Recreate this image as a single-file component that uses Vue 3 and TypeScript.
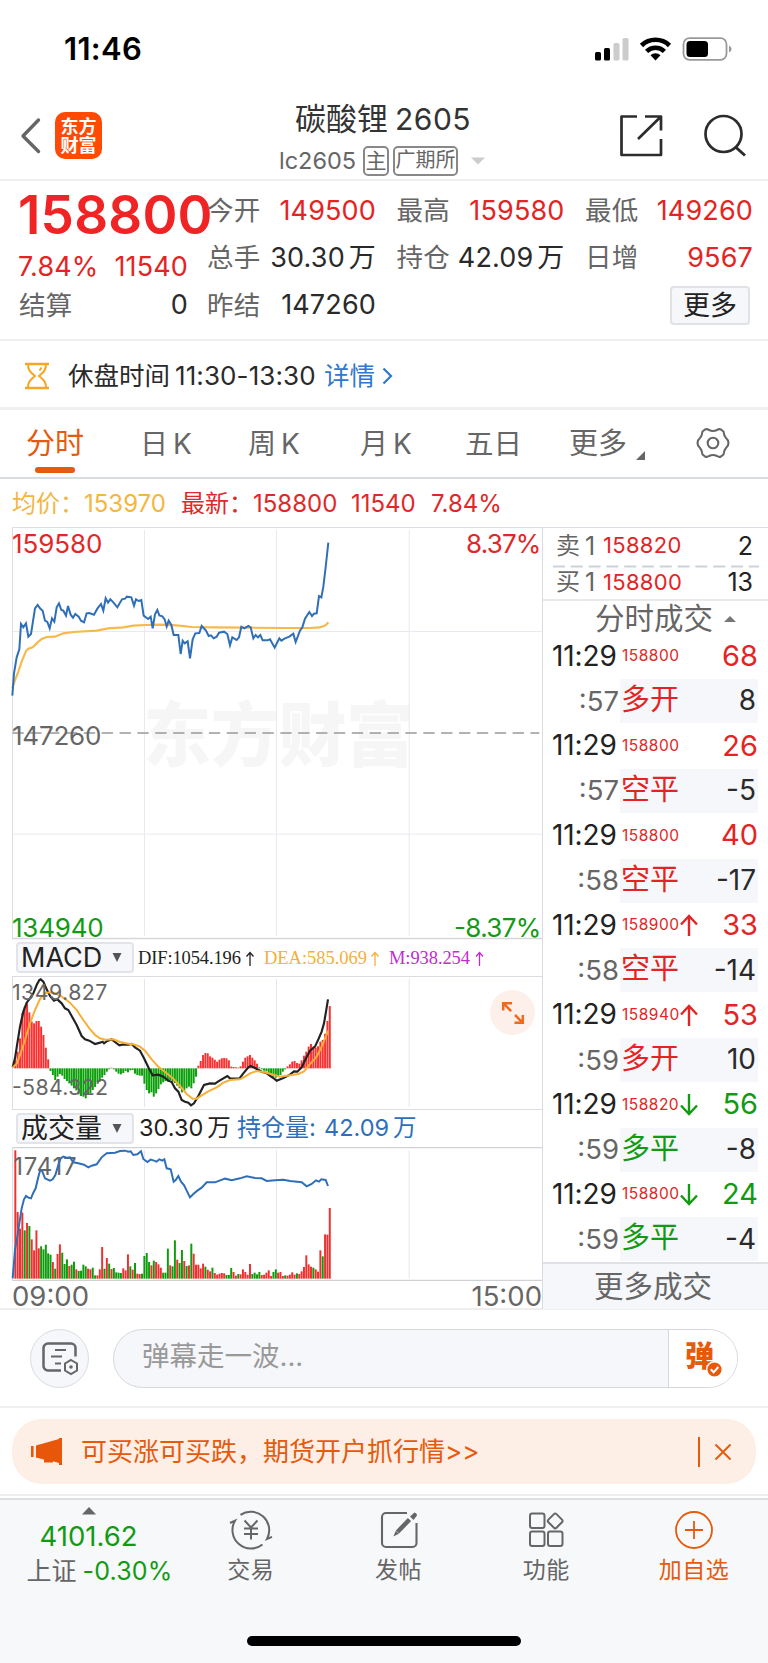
<script setup lang="ts">
interface Stat { label: string; value: string; tone: string }
interface Trade { sec: string; price: string; dir: string; vol: string; tone: string; kind: string; delta: string }

const stats: Stat[] = [
  { label: '今开', value: '149500', tone: 'red' },
  { label: '最高', value: '159580', tone: 'red' },
  { label: '最低', value: '149260', tone: 'red' },
  { label: '总手', value: '30.30万', tone: 'ink' },
  { label: '持仓', value: '42.09万', tone: 'ink' },
  { label: '日增', value: '9567', tone: 'red' },
  { label: '昨结', value: '147260', tone: 'ink' },
]

const trades: Trade[] = [
  { sec: ':57', price: '158800', dir: '', vol: '68', tone: 'red', kind: '多开', delta: '8' },
  { sec: ':57', price: '158800', dir: '', vol: '26', tone: 'red', kind: '空平', delta: '-5' },
  { sec: ':58', price: '158800', dir: '', vol: '40', tone: 'red', kind: '空平', delta: '-17' },
  { sec: ':58', price: '158900', dir: 'up', vol: '33', tone: 'red', kind: '空平', delta: '-14' },
  { sec: ':59', price: '158940', dir: 'up', vol: '53', tone: 'red', kind: '多开', delta: '10' },
  { sec: ':59', price: '158820', dir: 'down', vol: '56', tone: 'green', kind: '多平', delta: '-8' },
  { sec: ':59', price: '158800', dir: 'down', vol: '24', tone: 'green', kind: '多平', delta: '-4' },
]

const priceLine = '37,527 42,460 50,412 58,388 63,312 70,322 78,310 85,350 93,342 105,265 113,255 120,265 128,272 135,302 142,306 149,325 156,295 163,305 170,262 177,250 184,270 190,272 198,287 204,258 212,284 219,293 226,282 236,290 243,302 252,307 260,280 268,279 282,284 292,266 303,252 310,272 317,235 324,248 331,238 340,247 352,262 366,238 375,236 381,230 394,232 402,257 408,238 416,243 424,240 431,287 444,297 452,290 458,325 465,283 472,270 478,286 487,289 494,298 500,320 506,302 514,315 521,345 535,345 542,402 548,362 554,370 563,364 570,415 578,358 586,340 598,339 605,318 618,332 626,348 633,346 641,355 650,350 657,338 672,335 682,342 690,376 697,352 710,360 717,352 724,320 733,325 745,318 752,322 760,355 767,345 774,352 781,345 788,361 802,361 810,358 824,383 838,355 844,362 855,355 868,350 880,341 887,366 900,332 907,322 915,296 928,276 936,288 942,281 950,280 957,228 964,232 970,200 976,150 985,68'
const avgLine = '37,505 45,480 55,455 65,425 78,393 85,386 98,382 112,368 125,357 140,351 165,350 190,340 220,336 290,332 325,325 370,322 400,317 435,315 480,314 530,316 575,321 640,322 740,323 850,324 930,324 958,322 970,319 978,315 985,307'
const difLine = '38,412 45,385 52,340 60,290 70,245 80,218 90,205 100,190 110,165 118,150 122,148 130,155 140,178 150,198 162,212 172,208 185,220 195,235 205,240 215,258 230,285 245,318 255,328 268,332 285,342 300,338 308,335 312,340 320,334 335,328 345,336 358,346 370,343 385,344 395,342 405,352 420,362 432,385 445,412 458,436 475,434 490,440 505,452 515,456 525,475 535,485 545,510 555,515 565,518 573,526 582,520 595,498 612,465 630,460 645,461 655,454 665,448 682,438 690,445 718,446 730,430 745,412 752,408 765,414 785,425 800,430 820,444 830,452 850,444 870,434 882,424 892,425 905,412 918,385 930,362 945,350 955,328 965,305 972,280 978,245 984,208'
const deaLine = '38,412 50,402 60,375 75,330 90,280 105,240 120,207 135,190 148,187 165,190 180,196 195,207 210,218 230,240 250,270 268,295 285,315 300,325 315,329 340,328 360,336 385,341 400,343 420,350 435,362 455,388 475,410 500,430 520,446 540,468 560,492 578,506 590,506 605,496 625,484 650,472 670,458 690,450 720,448 735,440 750,430 770,423 790,426 815,433 840,440 870,436 895,432 912,424 930,402 950,380 965,350 978,318 985,302'
const oiLine = '38,505 45,420 52,380 58,340 65,295 72,268 78,258 85,263 93,265 100,248 107,235 114,205 120,182 126,182 135,205 150,212 158,208 166,195 175,165 182,145 190,140 200,143 210,142 220,157 235,160 252,164 265,172 275,167 290,163 305,142 320,130 345,128 360,123 375,122 385,125 392,124 400,135 412,133 423,124 430,147 442,156 452,149 462,152 470,155 478,148 487,152 493,148 500,175 512,178 521,215 527,210 535,198 543,215 552,225 570,262 580,252 592,242 605,233 620,217 645,217 675,206 695,211 720,205 740,199 765,204 785,205 800,213 825,211 850,209 870,213 905,217 920,229 935,222 948,211 957,215 964,208 977,210 984,228'

const macd: number[] = [25, 50, 90, 165, 185, 195, 168, 140, 135, 142, 142, 125, 100, 62, 27, -8, -20, -35, -25, -17, -22, -32, -38, -45, -52, -60, -66, -78, -83, -85, -90, -80, -74, -65, -56, -42, -40, -28, -20, -10, -3, 2, -3, -10, -16, -18, -14, -8, -12, -6, -5, -16, -20, -22, -22, -46, -65, -75, -72, -85, -75, -62, -48, -42, -38, -40, -36, -40, -44, -52, -60, -72, -68, -60, -55, -60, -45, -25, 8, 22, 40, 46, 45, 36, 32, 26, 20, 26, 30, 31, 30, 24, 5, 4, 3, 2, 6, 20, 32, 36, 40, 32, 24, 14, 3, -3, -7, -9, -15, -20, -25, -28, -24, -20, -10, -3, 6, 12, 20, 22, 16, 14, 24, 38, 50, 65, 73, 65, 62, 66, 80, 85, 104, 142, 187]
const volume = '385r 200r 150r 198r 145g 167r 158g 118r 85r 145r 91r 97g 88g 102g 76g 72g 50r 30g 74r 103r 78g 44g 58g 38r 42g 51g 28r 23g 24g 42g 37g 30r 28r 33g 10g 10r 28r 95r 30g 62r 45g 29r 32g 19g 18g 17g 31r 25r 73r 37g 27r 47g 15r 14r 15g 68g 77g 50g 40r 54g 50r 43r 33r 18g 18g 90g 40r 37g 115g 57r 47g 86g 53r 38g 40r 105g 75r 42r 42r 31r 45r 36g 27r 22r 33g 17r 12r 15r 17r 16r 11g 11g 32g 20r 9r 14g 13r 28r 20r 12r 44r 14g 18g 13g 20g 11r 12r 18r 25r 8r 20g 28g 18r 20r 8r 10g 9r 12r 19r 12r 16g 14r 22r 35r 70r 43r 36r 33g 28r 21r 85r 67g 133r 132r 212r'
  .split(' ')
  .map((s) => ({ h: parseInt(s, 10), up: s.endsWith('r') }))

const step = 7.04
const barX = (i: number): number => 43 + i * step
</script>

<template>
  <div class="app">
    <div class="status">
      <span class="clock">11:46</span>
      <svg class="sys" width="140" height="28" viewBox="594 35 140 28">
        <rect x="595" y="52" width="6" height="8.500" rx="1.600" />
        <rect x="604" y="48" width="6" height="12.500" rx="1.600" />
        <rect x="613.500" y="43" width="6" height="17.500" rx="1.600" fill="#ccc" />
        <rect x="622.500" y="38" width="6" height="22.500" rx="1.600" fill="#ccc" />
        <g fill="none" stroke="#000" stroke-width="4.600">
          <path d="M641.500 45.500a20 20 0 0 1 28 0" />
          <path d="M646.600 51.300a12.800 12.800 0 0 1 17.800 0" />
        </g>
        <path d="M655.500 60.500l-5-5.200a7 7 0 0 1 10 0z" />
        <rect x="683.500" y="38.200" width="43" height="21.600" rx="6" fill="none" stroke="#999" stroke-width="1.800" />
        <rect x="686.500" y="41" width="21.500" height="16" rx="3.500" />
        <path d="M729 45.500q2.600 1 2.600 3.500t-2.600 3.500z" fill="#999" />
      </svg>
    </div>

    <header class="head">
      <svg class="back" width="22" height="38" viewBox="0 0 22 38"><path d="M18.500 3L3 19L18.500 34.500" fill="none" stroke="#666" stroke-width="3.400" stroke-linecap="round" stroke-linejoin="round" /></svg>
      <div class="logo"><span>东方</span><span>财富</span></div>
      <div class="title">
        <div class="name">碳酸锂<b>2605</b></div>
        <div class="sub"><span class="code">lc2605</span><i class="tag one">主</i><i class="tag three">广期所</i><svg width="14" height="8" viewBox="0 0 14 8"><path d="M0 .5h14l-7 7z" fill="#ccc" /></svg></div>
      </div>
      <svg class="tools" width="130" height="50" viewBox="618 111 130 50" fill="none" stroke="#2c2c2c" stroke-width="2.700" stroke-linejoin="round">
        <path d="M637 116.500H621.500V155h39.500V139M645 116.500h16v14M661 116.500L638 139" />
        <circle cx="723.500" cy="134" r="18" />
        <path d="M735.500 147L745 155.500" stroke-width="3" />
      </svg>
    </header>

    <section class="quote">
      <div class="lead">
        <div class="last">158800</div>
        <div class="chg"><span>7.84%</span><span>11540</span></div>
        <div class="stat"><span class="lab">结算</span><span class="ink">0</span></div>
      </div>
      <div class="stats">
        <div v-for="s in stats" :key="s.label" class="stat">
          <span class="lab">{{ s.label }}</span><span :class="s.tone">{{ s.value.replace('万', '') }}<em v-if="s.value.endsWith('万')">万</em></span>
        </div>
        <div class="more-cell"><button class="more">更多</button></div>
      </div>
    </section>

    <section class="notice">
      <svg width="26" height="28" viewBox="0 0 26 28" fill="none" stroke="#f5a623" stroke-width="2"><path d="M1 2h24M1 26h24" stroke-width="2.400" /><path d="M4 2c0 7 3 8.500 7 12c-4 3.500-7 5-7 12M22 2c0 7-3 8.500-7 12c4 3.500 7 5 7 12M15.500 8.500l2-3" /></svg>
      <span class="n1">休盘时间</span><span class="n2">11:30-13:30</span><span class="n3">详情</span>
      <svg class="n4" width="11" height="18" viewBox="0 0 11 18"><path d="M1.500 1.500L9 9L1.500 16.500" fill="none" stroke="#2f78d0" stroke-width="2.200" /></svg>
    </section>

    <nav class="tabs">
      <span class="tab t1 on">分时</span>
      <span class="tab t2">日<b>K</b></span>
      <span class="tab t3">周<b>K</b></span>
      <span class="tab t4">月<b>K</b></span>
      <span class="tab t5">五日</span>
      <span class="tab t6">更多<svg width="9" height="9" viewBox="0 0 9 9"><path d="M9 0v9H0z" fill="#666" /></svg></span>
      <svg class="gear" width="34" height="34" viewBox="-17 -17 34 34" fill="none" stroke="#666" stroke-width="2.100" stroke-linejoin="round">
        <path d="M-8-13.500Q-6-14.500-4-13Q0-11 4-13Q6-14.500 8-13.500L10.500-11.500Q11-7 13-5Q15.500-3 15.500 0Q15.500 3 13 5Q11 7 10.500 11.500L8 13.500Q6 14.500 4 13Q0 11-4 13Q-6 14.500-8 13.500L-10.500 11.500Q-11 7-13 5Q-15.500 3-15.500 0Q-15.500-3-13-5Q-11-7-10.500-11.500Z" />
        <circle r="5.300" />
      </svg>
    </nav>

    <div class="legend">
      <span class="gold l1">均价：</span><span class="gold l2">153970</span><span class="l3">最新：</span><span class="l4">158800</span><span class="l5">11540</span><span class="l6">7.84%</span>
    </div>

    <section class="board">
      <div class="charts">
        <svg class="plot" width="530" height="412" viewBox="36 21 1590 1236">
          <text x="430" y="722" font-size="212" font-weight="900" fill="#f6f6f6" textLength="812" lengthAdjust="spacingAndGlyphs" class="cjk">东方财富</text>
          <g stroke="#e9eaef" stroke-width="3" fill="none">
            <path d="M433.500 30V1247M829.500 30V1247M1227.500 30V1247M38 334.500H1626M38 942.500H1626" />
          </g>
          <path d="M37.500 1257V22.500H1626" stroke="#dcdde2" stroke-width="3" fill="none" />
          <path d="M37 1255.500H1626" stroke="#d5d7dc" stroke-width="4" />
          <path d="M37 639H1618" stroke="#999" stroke-width="4.500" stroke-dasharray="34 19.600" />
          <polyline :points="avgLine" fill="none" stroke="#f8b84a" stroke-width="6.500" />
          <polyline :points="priceLine" fill="none" stroke="#2f6fb8" stroke-width="6" stroke-linejoin="miter" />
          <g font-size="78" class="num">
            <text x="36" y="99" fill="#e02828" textLength="271">159580</text>
            <text x="1624" y="99" fill="#e02828" text-anchor="end" textLength="226">8.37%</text>
            <text x="36" y="674" fill="#666" textLength="268">147260</text>
            <text x="36" y="1250" fill="#129b12" textLength="275">134940</text>
            <text x="1624" y="1250" fill="#129b12" text-anchor="end" textLength="262">-8.37%</text>
          </g>
        </svg>

        <div class="bar-head">
          <span class="pick">MACD<svg width="10" height="9" viewBox="0 0 10 9"><path d="M.5 0h9L5 9z" fill="#555" /></svg></span>
          <svg class="dif" width="360" height="30" viewBox="0 0 360 30" font-size="18.500">
            <text x="0" y="20.500" fill="#222" textLength="103">DIF:1054.196</text>
            <text x="126" y="20.500" fill="#f3b03c" textLength="103">DEA:585.069</text>
            <text x="251" y="20.500" fill="#c32bd0" textLength="81">M:938.254</text>
            <g fill="none" stroke-width="1.300">
              <path d="M112 23V9.500M108.500 13.500l3.500-4l3.500 4" stroke="#222" />
              <path d="M237 23V9.500M233.500 13.500l3.500-4l3.500 4" stroke="#f3b03c" />
              <path d="M341.500 23V9.500M338 13.500l3.500-4l3.500 4" stroke="#c32bd0" />
            </g>
          </svg>
        </div>

        <div class="macd">
          <svg class="plot" width="530" height="134" viewBox="36 138 1590 402">
            <path d="M433.500 147V531M829.500 147V531M1227.500 147V531" stroke="#e4e6ee" stroke-width="3" />
            <path d="M37 139.500H1626M37 538.500H1626M37.500 138V540" stroke="#dcdde2" stroke-width="3" fill="none" />
            <rect v-for="(v, i) in macd" :key="i" :x="barX(i)" :y="v > 0 ? 415 - v : 415" width="5.900" :height="Math.abs(v)" :fill="v > 0 ? '#fb3030' : '#0aa00a'" />
            <polyline :points="difLine" fill="none" stroke="#222" stroke-width="6.500" />
            <polyline :points="deaLine" fill="none" stroke="#f8b034" stroke-width="6" />
            <g font-size="64" fill="#666" class="num">
              <text x="36" y="211" textLength="286">1349.827</text>
              <text x="36" y="495" textLength="288">-584.322</text>
            </g>
          </svg>
          <button class="expand"><svg width="24" height="24" viewBox="0 0 24 24" fill="none" stroke="#ee6a1f" stroke-width="2.500"><path d="M2.200 9.500V2.200H11M2.200 2.200l8 8M14 14L21.800 21.800M21.800 14v7.800H13.500" /></svg></button>
        </div>

        <div class="bar-head vol-head">
          <span class="pick">成交量<svg width="10" height="9" viewBox="0 0 10 9"><path d="M.5 0h9L5 9z" fill="#555" /></svg></span>
          <span class="v1">30.30<em>万</em></span><span class="v2">持仓量:</span><span class="v3">42.09<em>万</em></span>
        </div>

        <svg class="plot" width="530" height="134" viewBox="36 111 1590 402">
          <path d="M433.500 121V505M829.500 121V505M1227.500 121V505" stroke="#e4e6ee" stroke-width="3" />
          <path d="M37 113H1626M37 511H1626" stroke="#cfd1d5" stroke-width="4" />
          <path d="M37.500 111V513" stroke="#dcdde2" stroke-width="3" />
          <rect v-for="(b, i) in volume" :key="i" :x="barX(i)" :y="506 - b.h" width="5.900" :height="b.h" :fill="b.up ? '#f03030' : '#0c9c0c'" />
          <text x="40" y="194" font-size="72" fill="#666" textLength="190" class="num">17417</text>
          <polyline :points="oiLine" fill="none" stroke="#2f6fb8" stroke-width="6" />
        </svg>
        <div class="times"><span>09:00</span><span>15:00</span></div>
      </div>

      <aside class="tape">
        <div class="ask"><span class="side">卖<b>1</b></span><span class="px">158820</span><span class="qty">2</span></div>
        <svg class="dash" width="206" height="3" viewBox="0 0 206 3"><path d="M0 1.500h206" stroke="#ccd2da" stroke-width="2" stroke-dasharray="12 5.800" /></svg>
        <div class="ask bid"><span class="side">买<b>1</b></span><span class="px">158800</span><span class="qty">13</span></div>
        <div class="tape-title">分时成交<svg width="12" height="6" viewBox="0 0 12 6"><path d="M0 6h12L6 0z" fill="#777" /></svg></div>
        <div class="rows">
          <div v-for="(t, i) in trades" :key="i" class="pair">
            <div class="row">
              <span class="tm">11:29</span><span class="sp">{{ t.price }}</span>
              <svg v-if="t.dir" :class="['arr', t.dir]" width="18" height="22" viewBox="0 0 18 22"><path d="M9 22V2M1 10.500L9 2l8 8.500" fill="none" stroke="currentColor" stroke-width="2.400" /></svg>
              <span :class="['big', t.tone]">{{ t.vol }}</span>
            </div>
            <div class="row">
              <span class="sec">{{ t.sec }}</span>
              <div class="shade"><span :class="['kind', t.tone]">{{ t.kind }}</span><span class="ink delta">{{ t.delta }}</span></div>
            </div>
          </div>
        </div>
        <div class="tape-more">更多成交</div>
      </aside>
    </section>

    <section class="chat">
      <button class="round"><svg width="40" height="36" viewBox="0 0 40 36" fill="none" stroke="#666" stroke-width="2.500"><path d="M20 29.500H7a4.500 4.500 0 0 1-4.500-4.500V7A4.500 4.500 0 0 1 7 2.500h23A4.500 4.500 0 0 1 34.500 7v8.500" /><path d="M14 9h11M10 15.500h11M14 22.500h6" stroke-width="2.200" /><path d="M30 19l6 3.500v7L30 33l-6-3.500v-7z" stroke-width="2" /><circle cx="30" cy="26" r="1.800" fill="#666" stroke="none" /></svg></button>
      <div class="pill">
        <span class="hint">弹幕走一波...</span>
        <span class="send"><b>弹</b><svg class="ok" width="17" height="17" viewBox="0 0 17 17"><circle cx="8.500" cy="8.500" r="7.800" fill="#e65a0c" stroke="#fff" stroke-width="1.400" /><path d="M4.800 8.300l2.800 3l4.800-5.300" fill="none" stroke="#fff" stroke-width="2" /></svg></span>
      </div>
    </section>

    <section class="promo-wrap">
      <div class="promo">
        <svg width="32" height="28" viewBox="0 0 32 28" fill="#e8560a"><path d="M0 8h2.600v11H0zM5 7.500L28 1V0h3v27h-3v-2l-6-1.700v1.200h-9v-3L5 19.500z" /></svg>
        <span class="slogan">可买涨可买跌，期货开户抓行情&gt;&gt;</span>
        <span class="sep"></span>
        <svg class="x" width="16" height="16" viewBox="0 0 16 16"><path d="M.5.500l15 15M15.500.500L.5 15.500" stroke="#e65a0c" stroke-width="1.900" /></svg>
      </div>
    </section>

    <footer class="foot">
      <div class="index">
        <svg width="14" height="8" viewBox="0 0 14 8"><path d="M0 7.500h14L7 0z" fill="#666" /></svg>
        <span class="idx">4101.62</span>
        <span class="idx2">上证<b>-0.30%</b></span>
      </div>
      <div class="item">
        <svg width="44" height="40" viewBox="-22 -20 44 40" fill="none" stroke="#666" stroke-width="2"><path d="M-21-7L-16-9.300A18.500 18.500 0 0 0 11.500 14.500M-10.500-15.200A18.500 18.500 0 0 1 16 9L21 6.800" /><path d="M-6.500-9.500L0-2.500L6.500-9.500M0-2.500V9.500M-7-1.500H7M-7 4H7" /></svg>
        <span>交易</span>
      </div>
      <div class="item">
        <svg width="44" height="40" viewBox="-22 -20 44 40" fill="none" stroke="#666" stroke-width="2.100"><path d="M8-17H-13a4 4 0 0 0-4 4V13a4 4 0 0 0 4 4H13.500a4 4 0 0 0 4-4V-7" /><path d="M10.500-10.500L-1.500 2" stroke-width="4.500" /><path d="M-3.200.800l-2.500 5.700l5.600-2.700zM11-13.500l3.500 3.500l3.500-4.500q0-2.500-2.500-3z" fill="#666" stroke="none" /></svg>
        <span>发帖</span>
      </div>
      <div class="item">
        <svg width="44" height="40" viewBox="-22 -20 44 40" fill="none" stroke="#666" stroke-width="2"><rect x="-16" y="-16.500" width="14.500" height="14.500" rx="2.200" /><rect x="-16" y="1.500" width="14.500" height="14.500" rx="2.200" /><rect x="2" y="1.500" width="14.500" height="14.500" rx="2.200" /><rect x="3.500" y="-14.800" width="11.400" height="11.400" rx="1.800" transform="rotate(45 9.200 -9.100)" /></svg>
        <span>功能</span>
      </div>
      <div class="item hot">
        <svg width="44" height="40" viewBox="-22 -20 44 40" fill="none" stroke="#e65a0c" stroke-width="1.800"><circle r="18" /><path d="M-9 0H9M0-9V9" /></svg>
        <span>加自选</span>
      </div>
      <div class="home"></div>
    </footer>
  </div>
</template>

<style>
html, body { margin: 0; background: #fff; }
</style>

<style scoped>
.app { width: 768px; height: 1663px; overflow: hidden; background: #fff; color: #222; font-family: Inter, "Noto Sans CJK SC", sans-serif; line-height: 1.2; display: flex; flex-direction: column; white-space: nowrap; }
.app * { box-sizing: border-box; flex-shrink: 0; }
svg { display: block; overflow: visible; }
b, i, em { font-weight: inherit; font-style: normal; }
button { font: inherit; padding: 0; }
.red { color: #e42424; }
.green { color: #129b12; }
.ink { color: #2a2a2a; }
.num { font-family: Inter, sans-serif; }
.cjk { font-family: "Noto Sans CJK SC", sans-serif; }
.status { height: 90px; display: flex; justify-content: space-between; align-items: flex-start; padding: 35px 34px 0 64px; color: #000; }
.clock { font-size: 31px; font-weight: 600; line-height: 28px; letter-spacing: 0.300px; }
.head { height: 91px; display: flex; border-bottom: 2px solid #f0f0f0; padding-left: 20px; }
.back { margin-top: 27px; }
.logo { margin: 22px 0 0 13px; width: 47px; height: 47px; border-radius: 10px; background: #ff4a06; color: #fff; display: flex; flex-direction: column; align-items: center; justify-content: center; font-size: 18px; font-weight: 700; line-height: 19px; }
.title { margin-left: 178px; width: 204px; }
.name { margin: 10px 0 0 15px; font-size: 31px; line-height: 38px; display: flex; color: #333; }
.name b { margin-left: 7px; font-size: 30px; letter-spacing: 0.500px; }
.sub { display: flex; align-items: center; height: 30px; margin-top: 8px; color: #777; margin-left: -1px; }
.code { font-size: 23.500px; width: 84px; color: #666; }
.tag { border: 2px solid #888; border-radius: 5px; height: 30px; line-height: 25px; font-size: 21px; text-align: center; color: #666; }
.one { width: 26px; margin-right: 4px; }
.three { width: 65px; margin-right: 13px; font-size: 20px; }
.tools { margin: 21px 0 0 134px; }
.quote { height: 160px; border-bottom: 2px solid #efefef; display: flex; padding-left: 19px; font-size: 27px; }
.lead { width: 169px; margin-right: 20px; }
.last { height: 69px; line-height: 69px; font-size: 53px; font-weight: 600; color: #f02424; margin-left: -1px; letter-spacing: 0.200px; }
.chg { height: 34px; line-height: 34px; display: flex; justify-content: space-between; color: #e42424; letter-spacing: 0.150px; margin-left: -1px; }
.lead .stat { height: 43px; }
.stats { display: grid; grid-template-columns: 169px 168px 168px; column-gap: 20.500px; grid-auto-rows: 47.400px; padding-top: 6px; margin-left: -1px; }
.stat { display: flex; justify-content: space-between; align-items: center; letter-spacing: 0.150px; }
.stat em, .v1 em, .v3 em { margin-left: 4px; }
.lab { color: #666; font-size: 26.500px; }
.more-cell { grid-column: 3; display: flex; justify-content: flex-end; align-items: center; padding-right: 3px; }
.more { width: 80px; height: 39px; border: 2px solid #e0e2e6; border-radius: 4px; background: #f6f7fa; font-size: 27px; line-height: 35px; color: #222; }
.notice { height: 69px; border-bottom: 3px solid #efefef; display: flex; align-items: center; padding: 4px 0 0 24px; font-size: 26px; color: #2a2a2a; }
.n1 { margin-left: 18px; font-size: 25.500px; }
.n2 { margin-left: 5px; width: 149px; letter-spacing: 0.100px; }
.n3 { font-size: 25.500px; color: #2f78d0; width: 58px; }
.tabs { height: 69px; border-bottom: 2px solid #d9dde0; display: flex; font-size: 28px; line-height: 68px; color: #666; padding-left: 26px; }
.tab { display: flex; position: relative; }
.tab b { margin-left: 5px; }
.t1 { width: 114px; font-size: 29px; }
.t1.on { color: #e65a0c; }
.t1.on::after { content: ""; position: absolute; left: 9px; top: 57px; width: 40px; height: 6px; border-radius: 3px; background: #e65a0c; }
.t2 { width: 108px; }
.t3 { width: 112px; }
.t4 { width: 105px; }
.t5 { width: 104px; font-size: 28.500px; }
.t6 { width: 127px; font-size: 29px; }
.t6 svg { margin: 41px 0 0 9px; }
.gear { margin-top: 16px; }
.legend { height: 48px; display: flex; align-items: center; padding: 2px 0 0 12px; font-size: 24px; color: #e02828; }
.gold { color: #f4b63f; }
.l1, .l3 { width: 72px; }
.l2 { width: 97px; }
.l4 { width: 98px; }
.l5 { width: 80px; }
.board { height: 783px; display: flex; border-bottom: 2px solid #eee; }
.charts { width: 542px; padding-left: 12px; }
.bar-head { height: 37px; display: flex; align-items: center; padding-left: 4px; }
.pick { width: 118px; height: 31px; border: 2px solid #e2e4e9; border-radius: 4px; background: #f6f7fa; display: flex; align-items: center; justify-content: space-between; padding: 0 10px 0 3px; font-size: 27px; line-height: 27px; color: #222; }
.dif { margin-left: 4px; font-family: "Liberation Serif", serif; }
.macd { position: relative; height: 134px; }
.expand { position: absolute; left: 478px; top: 14px; width: 45px; height: 45px; border: 0; border-radius: 50%; background: #fdf0ea; display: flex; align-items: center; justify-content: center; }
.vol-head { font-size: 23.500px; }
.v1 { margin-left: 5px; width: 98px; }
.v2 { color: #2f6fb8; font-size: 24px; width: 87px; }
.v3 { color: #2f6fb8; }
.times { height: 28px; display: flex; justify-content: space-between; font-size: 27.500px; line-height: 31px; color: #666; }
.tape { width: 226px; border-left: 1.500px solid #d9dbe0; border-top: 1px solid #dcdde2; display: flex; flex-direction: column; height: 782px; }
.ask { height: 37px; display: flex; align-items: center; padding: 0 15px 2px 13px; }
.bid { height: 33px; border-bottom: 2px solid #eaeaea; padding-bottom: 3px; }
.dash { margin-left: 10px; }
.side { width: 47px; display: flex; color: #666; font-size: 24px; line-height: 30px; }
.side b { margin-left: 5px; font-size: 25px; }
.px { color: #e42424; font-size: 22px; letter-spacing: 0.300px; }
.qty { margin-left: auto; font-size: 25px; }
.tape-title { height: 33px; display: flex; align-items: center; padding: 2px 0 0 52px; font-size: 29.500px; line-height: 33px; color: #666; }
.tape-title svg { margin-left: 11px; }
.rows { height: 627.500px; display: flex; flex-direction: column; }
.pair { height: 89.700px; }
.row { height: 44.850px; display: flex; align-items: center; padding: 0 10px 0 9px; }
.tm { width: 70px; font-size: 28px; letter-spacing: -0.100px; }
.sp { width: 58px; font-size: 15.500px; color: #e42424; letter-spacing: 0.500px; }
.arr { color: #e42424; }
.arr.down { color: #129b12; transform: rotate(180deg); }
.big { margin-left: auto; font-size: 29px; }
.sec { width: 67px; text-align: right; font-size: 27.500px; color: #666; }
.shade { height: 44px; width: 138px; margin-left: 1px; background: #f6f7fa; display: flex; justify-content: space-between; align-items: center; padding: 0 2px 0 1px; font-size: 29px; }
.kind { padding-bottom: 1px; }
.delta { font-size: 28px; }
.tape-more { flex: 1 1 auto; border-top: 2px solid #dfe1e5; background: #f6f7fa; color: #666; font-size: 29.500px; display: flex; align-items: center; padding-left: 51px; }
.chat { height: 98px; border-bottom: 2px solid #f0f0f0; display: flex; align-items: center; padding-left: 30px; }
.round { width: 59px; height: 59px; border-radius: 50%; border: 1.500px solid #d9dce2; background: #f6f7fa; display: flex; align-items: center; justify-content: center; }
.round svg { margin: 2px 0 0 3px; }
.pill { margin-left: 24px; width: 625px; height: 59px; border: 1.500px solid #d4d8de; border-radius: 30px; background: #f6f7fa; display: flex; overflow: hidden; }
.hint { width: 554px; padding-left: 28px; color: #999; font-size: 27.500px; line-height: 52px; }
.send { position: relative; width: 71px; border-left: 1.500px solid #d4d8de; background: #fff; }
.send b { display: block; margin: 0 0 0 16px; font-weight: 900; font-size: 29px; line-height: 53px; color: #e65a0c; }
.ok { position: absolute; left: 37px; top: 31px; }
.promo-wrap { height: 88px; padding: 11px 12px 0; border-bottom: 2px solid #eee; }
.promo { height: 65px; border-radius: 30px; background: #fdeee6; display: flex; align-items: center; padding-left: 19px; color: #e65a0c; }
.slogan { margin-left: 18px; font-size: 26px; width: 617px; }
.sep { width: 1.500px; height: 30px; background: #e65a0c; }
.x { margin-left: 15px; }
.foot { flex: 1 1 auto; margin-top: 2px; border-top: 2px solid #dcdfe2; background: #f6f8fa; display: flex; position: relative; }
.index { width: 177px; display: flex; flex-direction: column; align-items: center; padding-top: 7px; }
.idx { color: #129b12; font-size: 27.500px; line-height: 40px; margin-top: 1px; }
.idx2 { display: flex; color: #666; font-size: 25px; line-height: 30px; margin-left: 22px; }
.idx2 b { color: #129b12; margin-left: 6px; letter-spacing: 0.200px; }
.item { width: 147.700px; display: flex; flex-direction: column; align-items: center; padding-top: 10px; font-size: 23px; line-height: 40px; color: #666; letter-spacing: 0.500px; }
.hot { color: #e65a0c; }
.home { position: absolute; left: 247px; bottom: 17px; width: 274px; height: 10px; border-radius: 5px; background: #000; }
</style>
